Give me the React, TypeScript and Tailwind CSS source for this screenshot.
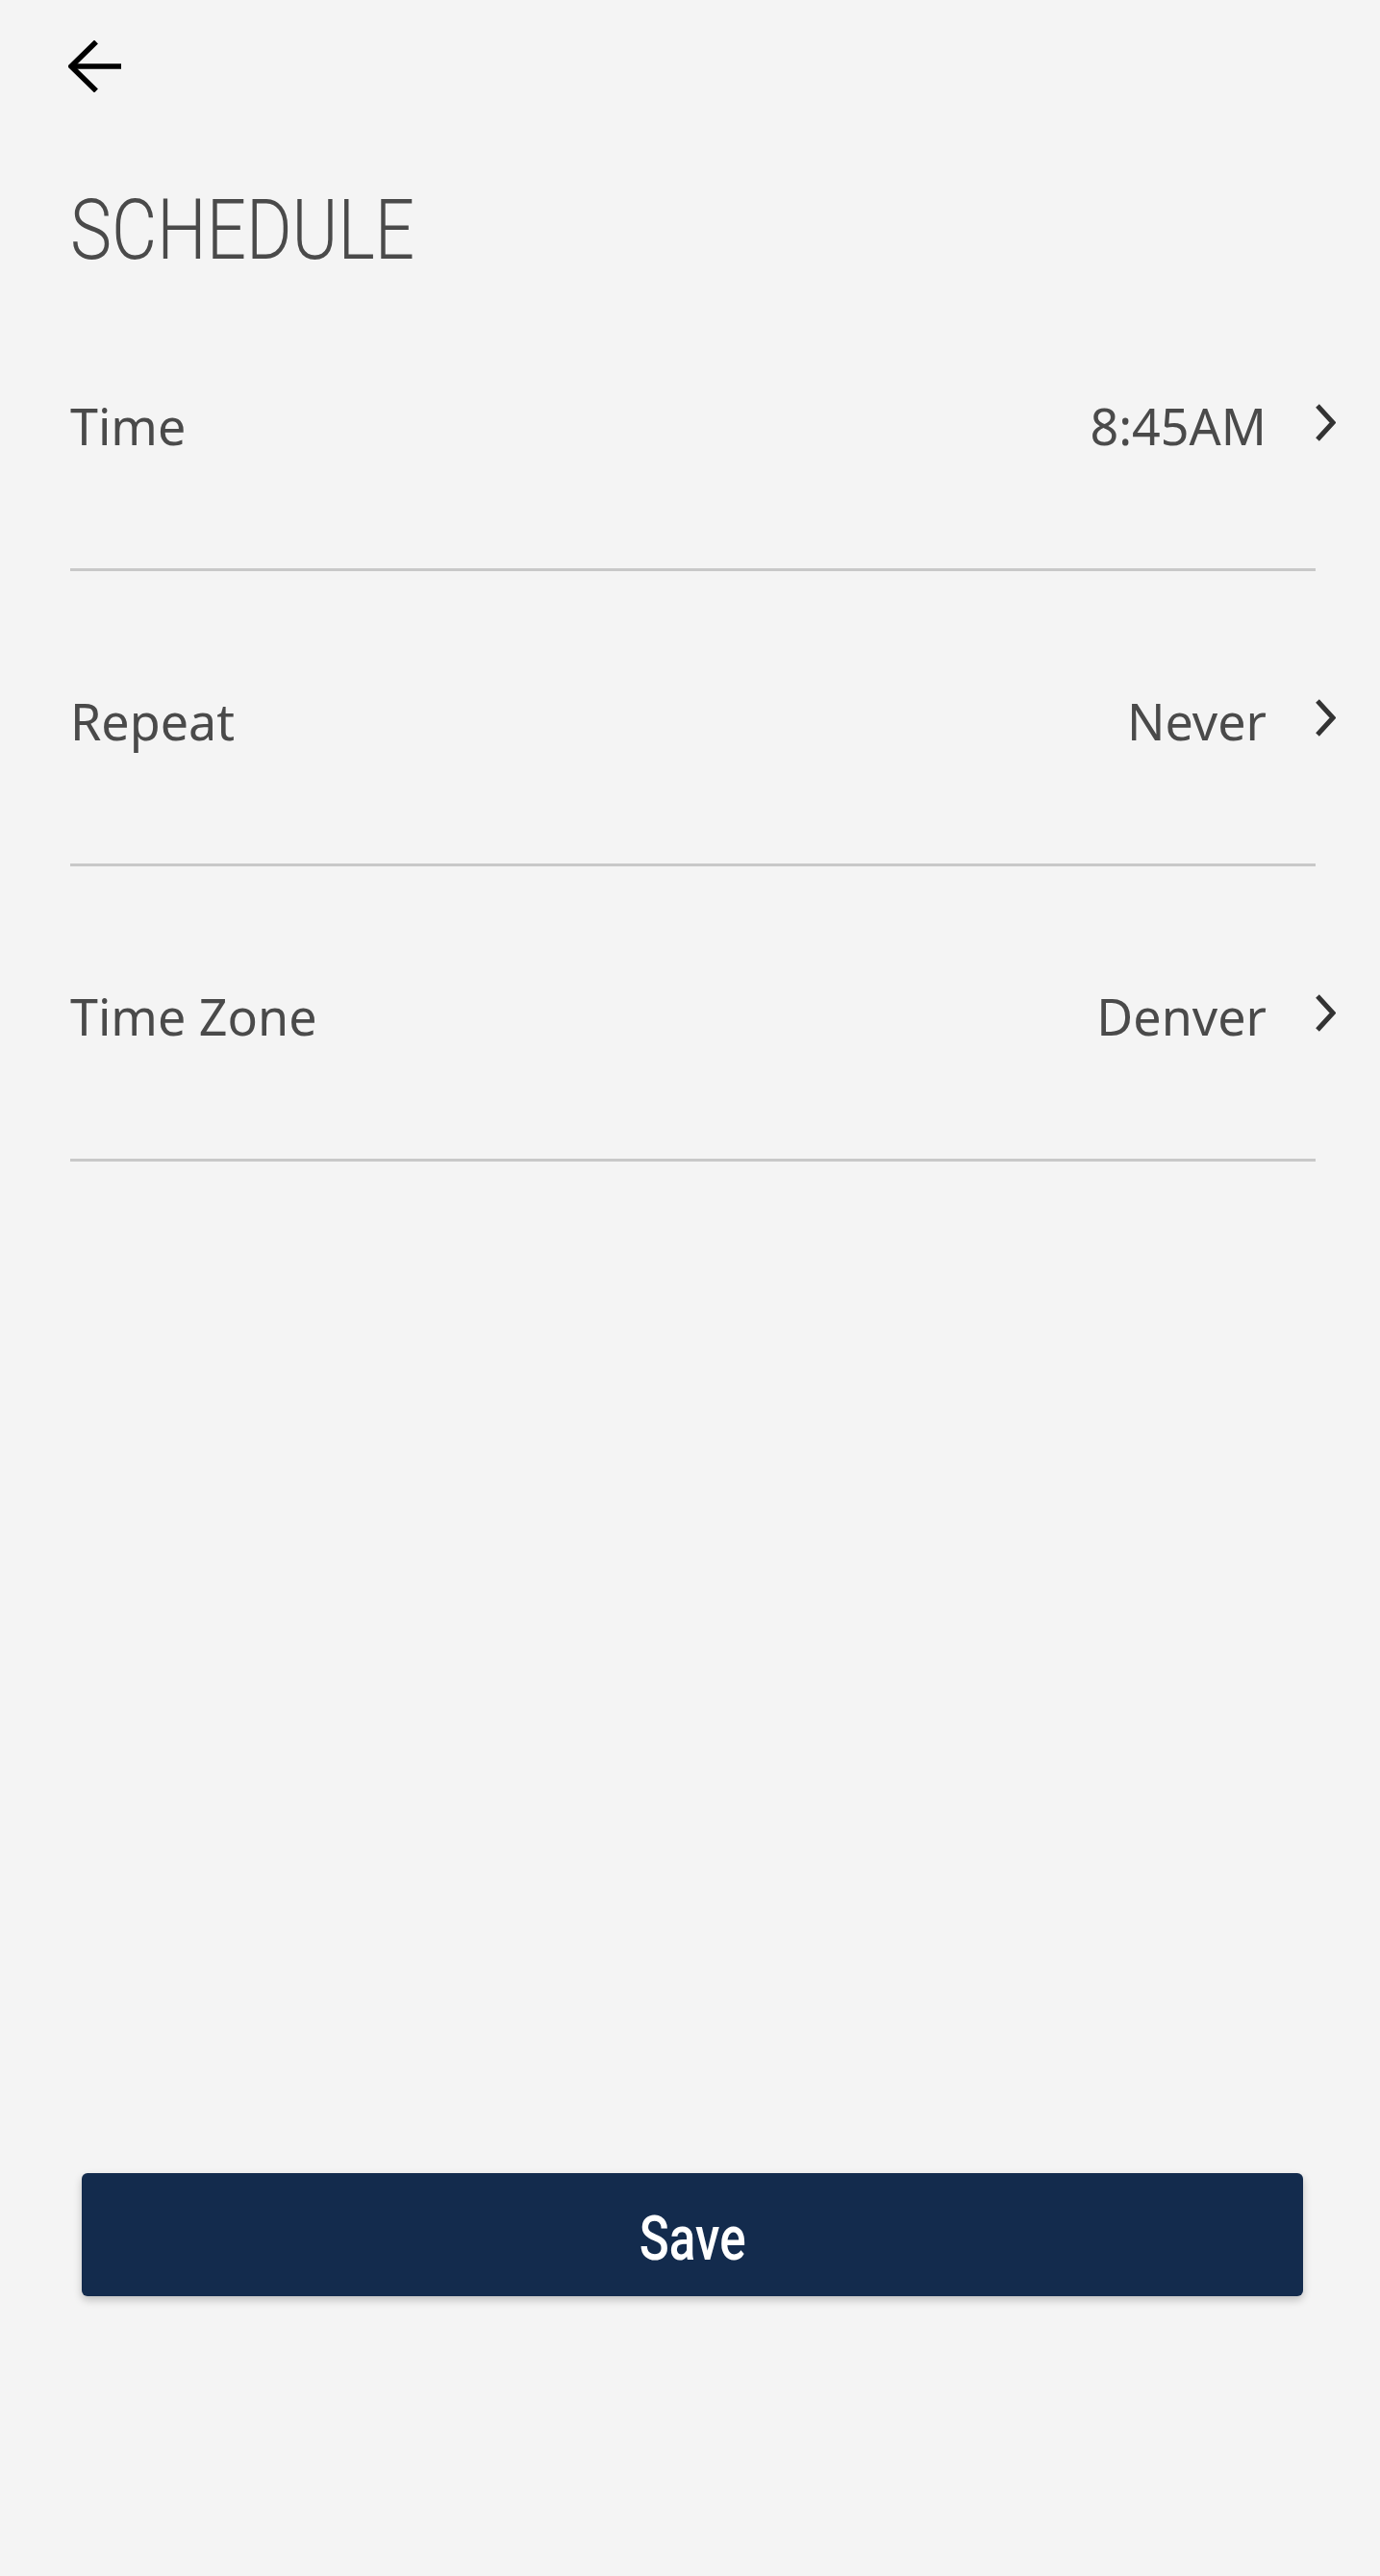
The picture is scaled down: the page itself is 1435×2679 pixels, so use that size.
import React from 'react';

const rows = [
  { label: 'Time', value: '8:45AM' },
  { label: 'Repeat', value: 'Never' },
  { label: 'Time Zone', value: 'Denver' },
];

const Chevron: React.FC = () => (
  <svg width="21" height="39" viewBox="0 0 21 39" className="-mr-[21px] ml-[51px] -mt-[8px]">
    <polyline points="2,2 18,19.5 2,37" fill="none" stroke="#333333" strokeWidth="5" />
  </svg>
);

const App: React.FC = () => {
  return (
    <div className="flex h-[2679px] w-full flex-col bg-[#f4f4f4] font-['Noto_Sans',sans-serif] text-[#4a4a4a]">
      <div className="px-[71px] pt-[42px]">
        <svg width="56" height="54" viewBox="0 0 56 54">
          <line x1="55" y1="27" x2="4" y2="27" stroke="#000" strokeWidth="5.5" />
          <polyline points="29,1.5 3,27 29,52.5" fill="none" stroke="#000" strokeWidth="5.5" />
        </svg>
      </div>

      <div className="px-[73px] pt-[100px]">
        <h1 className="origin-left scale-x-[0.835] font-['Roboto',sans-serif] text-[87px] leading-none font-[350] whitespace-nowrap">
          SCHEDULE
        </h1>
      </div>

      <div className="mx-[73px] mr-[67px] mt-[4px]">
        {rows.map((row) => (
          <div
            key={row.label}
            className="flex h-[307px] items-start border-b-[3px] border-[#c8c8c8] pt-[130px]"
          >
            <span className="flex-1 text-[52px] leading-[52px]">{row.label}</span>
            <div className="flex items-center">
              <span className="text-[52px] leading-[52px]">{row.value}</span>
              <Chevron />
            </div>
          </div>
        ))}
      </div>

      <div className="flex-1" />

      <div className="pr-[80px] pb-[291px] pl-[85px]">
        <button className="flex h-[128px] w-full items-center justify-center rounded-[6px] bg-[#132b4d] pt-[10px] shadow-[0_4px_8px_rgba(0,0,0,0.22)]">
          <span className="inline-block scale-x-[0.8] font-['Roboto',sans-serif] text-[64px] leading-none font-medium text-white">
            Save
          </span>
        </button>
      </div>
    </div>
  );
};

export default App;
